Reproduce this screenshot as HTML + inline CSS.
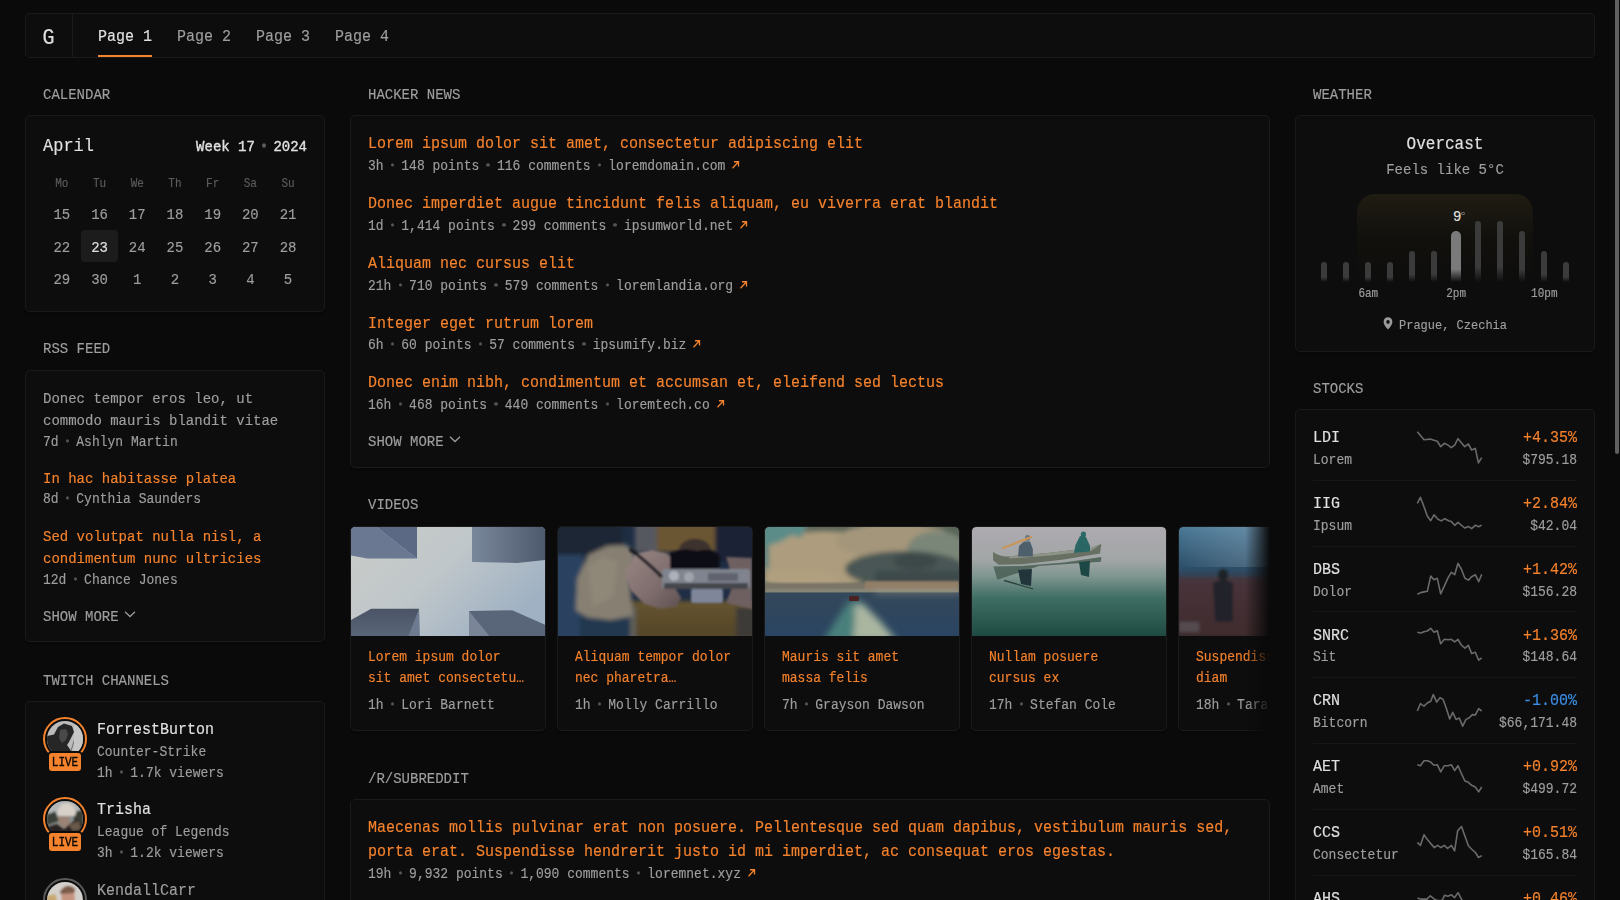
<!DOCTYPE html><html><head><meta charset="utf-8"><style>
*{box-sizing:border-box}
html,body{margin:0;padding:0;width:1620px;height:900px;overflow:hidden;background:#0a0a0a}
body{font-family:"Liberation Mono",monospace;font-size:13px;line-height:1.6;color:#9e9e9e;position:relative;-webkit-text-stroke:0.15px currentColor}
a{color:inherit;text-decoration:none}
.abs{position:absolute!important}
.card{position:absolute;background:#0d0d0d;border:1px solid #1a1a1a;border-radius:5px;padding:15px 17px;overflow:hidden;box-shadow:0 3px 0 0 #080808}
.wh{position:absolute;font-size:14px;line-height:23px;color:#9e9e9e;text-transform:uppercase;white-space:nowrap}
.hl{color:#e0e0e0}
.pri{color:#f5822c}
.sub{color:#5c5c5c}
.h1{font-size:17px;line-height:27.2px}
.h2{font-size:16px;line-height:25.6px}
.h3{font-size:15px;line-height:24px}
.h4{font-size:14px;line-height:22.4px}
.h5{font-size:12px;line-height:19.2px}
.h6{font-size:11px;line-height:17.6px}
.b{font-size:13px;line-height:20.8px}
.nw{white-space:nowrap}
.h1,.h2,.h3,.h4,.h5,.h6,.b,.more{position:relative;top:calc(.094em + .7px)}
.h1,.h2,.h3,.h4,.h5,.h6,.b,.more,.wh,.sy{transform:scaleY(1.1);transform-origin:0 calc(50% + .266em)}
.wh{padding-top:1.3px}
.sep{display:inline-block;width:3.5px;height:3.5px;border-radius:50%;background:#555;margin:0 7.1px;vertical-align:middle;position:relative;top:-1px}
.arr{display:inline-block;width:9px;height:9px;margin-left:6px;vertical-align:baseline;position:relative;top:0px}
.more{font-size:14px;line-height:22.4px;text-transform:uppercase;color:#9e9e9e}
</style></head><body><div class="abs" style="left:25px;top:13px;width:1570px;height:45px;background:#0d0d0d;border:1px solid #1a1a1a;border-radius:5px"></div>
<div class="abs" style="left:26px;top:14px;width:47px;height:43px;border-right:1px solid #1a1a1a"></div><div class="abs hl" style="left:42.6px;top:16.7px;font-size:20px;line-height:43px;transform:scaleY(1.12);transform-origin:0 26.8px">G</div>
<div class="abs hl h3" style="left:98px;top:15.6px;line-height:43px">Page 1</div>
<div class="abs h3" style="left:177px;top:15.6px;line-height:43px">Page 2</div>
<div class="abs h3" style="left:256px;top:15.6px;line-height:43px">Page 3</div>
<div class="abs h3" style="left:335px;top:15.6px;line-height:43px">Page 4</div>
<div class="abs" style="left:98px;top:55px;width:54px;height:2px;background:#f5822c"></div>

<div class="abs" style="left:1615px;top:-2px;width:4px;height:456px;background:#606060;border-radius:2px"></div>
<div class="wh" style="left:43px;top:83px">Calendar</div>
<div class="card" style="left:25px;top:115px;width:300px;height:197px"><div style="display:flex;justify-content:space-between;align-items:baseline"><div class="h1 hl">April</div><div class="h4 hl" style="-webkit-text-stroke:0.35px #e0e0e0">Week 17<span class="sep" style="background:#5c5c5c;margin:0 7px 0 7.5px;width:4px;height:4px"></span>2024</div></div><div style="display:flex;margin-top:16px" class="h6 sub"><div style="width:37.714px;text-align:center">Mo</div><div style="width:37.714px;text-align:center">Tu</div><div style="width:37.714px;text-align:center">We</div><div style="width:37.714px;text-align:center">Th</div><div style="width:37.714px;text-align:center">Fr</div><div style="width:37.714px;text-align:center">Sa</div><div style="width:37.714px;text-align:center">Su</div></div><div style="display:flex;flex-wrap:wrap;margin-top:5.6px"><div style="width:37.714px;text-align:center;padding:5px 0"><div class="h4">15</div></div><div style="width:37.714px;text-align:center;padding:5px 0"><div class="h4">16</div></div><div style="width:37.714px;text-align:center;padding:5px 0"><div class="h4">17</div></div><div style="width:37.714px;text-align:center;padding:5px 0"><div class="h4">18</div></div><div style="width:37.714px;text-align:center;padding:5px 0"><div class="h4">19</div></div><div style="width:37.714px;text-align:center;padding:5px 0"><div class="h4">20</div></div><div style="width:37.714px;text-align:center;padding:5px 0"><div class="h4">21</div></div><div style="width:37.714px;text-align:center;padding:5px 0"><div class="h4">22</div></div><div style="width:37.714px;text-align:center;padding:5px 0;background:#1c1c1c;border-radius:4px"><div class="h4 hl">23</div></div><div style="width:37.714px;text-align:center;padding:5px 0"><div class="h4">24</div></div><div style="width:37.714px;text-align:center;padding:5px 0"><div class="h4">25</div></div><div style="width:37.714px;text-align:center;padding:5px 0"><div class="h4">26</div></div><div style="width:37.714px;text-align:center;padding:5px 0"><div class="h4">27</div></div><div style="width:37.714px;text-align:center;padding:5px 0"><div class="h4">28</div></div><div style="width:37.714px;text-align:center;padding:5px 0"><div class="h4">29</div></div><div style="width:37.714px;text-align:center;padding:5px 0"><div class="h4">30</div></div><div style="width:37.714px;text-align:center;padding:5px 0"><div class="h4">1</div></div><div style="width:37.714px;text-align:center;padding:5px 0"><div class="h4">2</div></div><div style="width:37.714px;text-align:center;padding:5px 0"><div class="h4">3</div></div><div style="width:37.714px;text-align:center;padding:5px 0"><div class="h4">4</div></div><div style="width:37.714px;text-align:center;padding:5px 0"><div class="h4">5</div></div></div></div>
<div class="wh" style="left:43px;top:337px">RSS Feed</div>
<div class="card" style="left:25px;top:370px;width:300px;height:272px"><div class="h4 nw">Donec tempor eros leo, ut</div><div class="h4 nw">commodo mauris blandit vitae</div><div class="b nw">7d<span class="sep"></span>Ashlyn Martin</div><div class="h4 pri" style="margin-top:14.5px">In hac habitasse platea</div><div class="b nw">8d<span class="sep"></span>Cynthia Saunders</div><div class="h4 pri nw" style="margin-top:14.5px">Sed volutpat nulla nisl, a</div><div class="h4 pri nw">condimentum nunc ultricies</div><div class="b nw">12d<span class="sep"></span>Chance Jones</div><div class="more" style="margin-top:14.5px">Show more<svg width="12" height="8" viewBox="0 0 12 8" style="margin-left:5px;vertical-align:middle;position:relative;top:-2px"><path d="M1 1.5 L6 6 L11 1.5" stroke="#9e9e9e" stroke-width="1.2" fill="none"/></svg></div></div>
<div class="wh" style="left:43px;top:669px">Twitch Channels</div>
<div class="card" style="left:25px;top:701px;width:300px;height:260px"><div style="display:flex;gap:10px;margin-top:0px"><div style="position:relative;width:44px;height:44px;flex-shrink:0;border:2px solid #f5822c;border-radius:50%;padding:2px"><div style="width:36px;height:36px;border-radius:50%;overflow:hidden"><svg width="36" height="36" viewBox="0 0 36 36" style="display:block"><defs><filter id="a1b"><feGaussianBlur stdDeviation="0.6"/></filter></defs>
<rect width="36" height="36" fill="#bcbcbc"/>
<g filter="url(#a1b)">
<path d="M0 15 L7 13.5 L11 6 L17 2.5 L25 5 L27 11 L24 17 L22 21 L20 24 L27 34 L27 40 L0 40 Z" fill="#262626"/>
<path d="M13 9 L19 8 L21 13 L19 19 L15 22 L12 17 Z" fill="#4a4a4a"/>
<path d="M29 14 L22 36" stroke="#5a5a5a" stroke-width="0.8"/>
<rect x="27" y="4" width="12" height="34" fill="#c6c6c6"/>
</g></svg></div><div style="position:absolute;left:2px;top:32px;width:36px;height:22px;background:#0d0d0d;border-radius:5px;padding:2px"><div style="width:32px;height:18px;background:#f5822c;border-radius:3px;color:#0a0a0a;font-size:11px;line-height:18px;text-align:center;-webkit-text-stroke:0.35px #0a0a0a"><span style="display:inline-block;transform:scaleY(1.1);position:relative;top:1px">LIVE</span></div></div></div><div style="min-width:0"><div class="h3 hl">ForrestBurton</div><div class="b">Counter-Strike</div><div class="b nw">1h<span class="sep"></span>1.7k viewers</div></div></div><div style="display:flex;gap:10px;margin-top:14.4px"><div style="position:relative;width:44px;height:44px;flex-shrink:0;border:2px solid #f5822c;border-radius:50%;padding:2px"><div style="width:36px;height:36px;border-radius:50%;overflow:hidden"><svg width="36" height="36" viewBox="0 0 36 36" style="display:block"><defs><filter id="a2b"><feGaussianBlur stdDeviation="0.8"/></filter></defs>
<rect width="36" height="36" fill="#8a9090"/>
<g filter="url(#a2b)">
<rect x="0" y="0" width="36" height="12" fill="#b4b8b8"/>
<path d="M0 14 L8 10 L12 20 L0 24 Z" fill="#3a4038"/>
<path d="M26 12 L36 8 L36 26 L28 24 Z" fill="#3a3e36"/>
<path d="M10 13 Q11 3 19 2 Q27 2 29 12 L28 15 L11 15 Z" fill="#d6d0c8"/>
<path d="M11 15 L22 15 L23 24 L17 27 L12 23 Z" fill="#9a8274"/>
<path d="M0 26 L10 23 L17 28 L24 22 L30 18 L36 24 L36 40 L0 40 Z" fill="#2a2420"/>
<path d="M22 24 L32 20 L34 28 L26 30 Z" fill="#6a5a48"/>
</g></svg></div><div style="position:absolute;left:2px;top:32px;width:36px;height:22px;background:#0d0d0d;border-radius:5px;padding:2px"><div style="width:32px;height:18px;background:#f5822c;border-radius:3px;color:#0a0a0a;font-size:11px;line-height:18px;text-align:center;-webkit-text-stroke:0.35px #0a0a0a"><span style="display:inline-block;transform:scaleY(1.1);position:relative;top:1px">LIVE</span></div></div></div><div style="min-width:0"><div class="h3 hl">Trisha</div><div class="b">League of Legends</div><div class="b nw">3h<span class="sep"></span>1.2k viewers</div></div></div><div style="display:flex;gap:10px;margin-top:15px"><div style="position:relative;width:44px;height:44px;flex-shrink:0;border:2px solid #5a5a5a;border-radius:50%;padding:2px"><div style="width:36px;height:36px;border-radius:50%;overflow:hidden"><svg width="36" height="36" viewBox="0 0 36 36" style="display:block"><defs><filter id="a3b"><feGaussianBlur stdDeviation="0.8"/></filter></defs>
<rect width="36" height="36" fill="#d4d0cc"/>
<g filter="url(#a3b)">
<path d="M0 14 L8 12 L12 24 L8 40 L0 40 Z" fill="#c8a870"/>
<path d="M14 8 Q20 3 27 8 L28 20 Q22 28 15 22 Z" fill="#c49480"/>
<path d="M13 10 Q20 0 28 7 L27 11 L14 12 Z" fill="#7a5a48"/>
</g></svg></div></div><div style="min-width:0"><div class="h3 ">KendallCarr</div><div class="b">Valorant</div><div class="b nw">Offline</div></div></div></div>
<div class="wh" style="left:368px;top:83px">Hacker News</div>
<div class="card" style="left:350px;top:115px;width:920px;height:353px"><div style="margin-top:0px"><div class="h3 pri nw">Lorem ipsum dolor sit amet, consectetur adipiscing elit</div><div class="b nw">3h<span class="sep"></span>148 points<span class="sep"></span>116 comments<span class="sep"></span>loremdomain.com<svg class="arr" viewBox="0 0 9 9"><path d="M1.5 7.5 L7.5 1.5 M3 1.5 H7.5 V6" stroke="#f5822c" stroke-width="1.3" fill="none"/></svg></div></div><div style="margin-top:15px"><div class="h3 pri nw">Donec imperdiet augue tincidunt felis aliquam, eu viverra erat blandit</div><div class="b nw">1d<span class="sep"></span>1,414 points<span class="sep"></span>299 comments<span class="sep"></span>ipsumworld.net<svg class="arr" viewBox="0 0 9 9"><path d="M1.5 7.5 L7.5 1.5 M3 1.5 H7.5 V6" stroke="#f5822c" stroke-width="1.3" fill="none"/></svg></div></div><div style="margin-top:15px"><div class="h3 pri nw">Aliquam nec cursus elit</div><div class="b nw">21h<span class="sep"></span>710 points<span class="sep"></span>579 comments<span class="sep"></span>loremlandia.org<svg class="arr" viewBox="0 0 9 9"><path d="M1.5 7.5 L7.5 1.5 M3 1.5 H7.5 V6" stroke="#f5822c" stroke-width="1.3" fill="none"/></svg></div></div><div style="margin-top:15px"><div class="h3 pri nw">Integer eget rutrum lorem</div><div class="b nw">6h<span class="sep"></span>60 points<span class="sep"></span>57 comments<span class="sep"></span>ipsumify.biz<svg class="arr" viewBox="0 0 9 9"><path d="M1.5 7.5 L7.5 1.5 M3 1.5 H7.5 V6" stroke="#f5822c" stroke-width="1.3" fill="none"/></svg></div></div><div style="margin-top:15px"><div class="h3 pri nw">Donec enim nibh, condimentum et accumsan et, eleifend sed lectus</div><div class="b nw">16h<span class="sep"></span>468 points<span class="sep"></span>440 comments<span class="sep"></span>loremtech.co<svg class="arr" viewBox="0 0 9 9"><path d="M1.5 7.5 L7.5 1.5 M3 1.5 H7.5 V6" stroke="#f5822c" stroke-width="1.3" fill="none"/></svg></div></div><div class="more" style="margin-top:14px">Show more<svg width="12" height="8" viewBox="0 0 12 8" style="margin-left:5px;vertical-align:middle;position:relative;top:-2px"><path d="M1 1.5 L6 6 L11 1.5" stroke="#9e9e9e" stroke-width="1.2" fill="none"/></svg></div></div>
<div class="wh" style="left:368px;top:493px">Videos</div>
<div class="abs" style="left:350px;top:526px;width:920px;height:210px;overflow:hidden;-webkit-mask-image:linear-gradient(90deg,#000 0,#000 895px,transparent 920px)"><div style="position:absolute;left:0px;top:0;width:196px;height:205px;background:#0d0d0d;border:1px solid #1a1a1a;border-radius:5px;overflow:hidden;box-shadow:0 3px 0 0 #080808"><div style="width:194px;height:109px;border-radius:4px 4px 0 0;overflow:hidden"><svg width="194" height="109" viewBox="0 0 194 109" style="display:block">
<defs>
<linearGradient id="t1s" x1="0" y1="0" x2="1" y2="0.6"><stop offset="0" stop-color="#c9cbc7"/><stop offset="0.5" stop-color="#c0c7ca"/><stop offset="1" stop-color="#9fb1c3"/></linearGradient>
<linearGradient id="t1tr" x1="0" y1="0" x2="1" y2="0"><stop offset="0" stop-color="#7a889c"/><stop offset="1" stop-color="#4d596d"/></linearGradient>
<linearGradient id="t1bl" x1="0" y1="0" x2="0" y2="1"><stop offset="0" stop-color="#4a5466"/><stop offset="1" stop-color="#5a6578"/></linearGradient>
</defs>
<rect width="194" height="109" fill="url(#t1s)"/>
<polygon points="0,0 25.5,0 66,31.6 16.5,31.6 0,28.5" fill="#6a7892"/>
<polygon points="25.5,0 66,0 66,31.6" fill="#5b6985"/>
<polygon points="121,0 194,0 194,33 166,36 121,35" fill="url(#t1tr)"/>
<polygon points="0,93 20.2,81.7 68,81.7 68.5,109 0,109" fill="url(#t1bl)"/>
<polygon points="68,81.7 68.5,109 57.5,109" fill="#6d7a90"/>
<polygon points="118,84.1 161.2,83.3 194,97.7 194,109 118,109" fill="#596579"/>
<polygon points="118,84.1 138.4,109 118,109" fill="#7a8598"/>
</svg></div><div style="padding:10px 17px 0 17px"><div class="b pri nw">Lorem ipsum dolor</div><div class="b pri nw">sit amet consectetu…</div><div class="b nw" style="margin-top:6px">1h<span class="sep"></span>Lori Barnett</div></div></div><div style="position:absolute;left:207px;top:0;width:196px;height:205px;background:#0d0d0d;border:1px solid #1a1a1a;border-radius:5px;overflow:hidden;box-shadow:0 3px 0 0 #080808"><div style="width:194px;height:109px;border-radius:4px 4px 0 0;overflow:hidden"><svg width="194" height="109" viewBox="0 0 194 109" style="display:block">
<defs>
<filter id="t2b" x="-20%" y="-20%" width="140%" height="140%"><feGaussianBlur stdDeviation="2"/></filter>
<filter id="t2c" x="-20%" y="-20%" width="140%" height="140%"><feGaussianBlur stdDeviation="0.8"/></filter>
<linearGradient id="t2h" x1="0" y1="0" x2="1" y2="1"><stop offset="0" stop-color="#9a8886"/><stop offset="0.6" stop-color="#7e6c6c"/><stop offset="1" stop-color="#5e5050"/></linearGradient>
<linearGradient id="t2m" x1="0" y1="0" x2="0" y2="1"><stop offset="0" stop-color="#66552f"/><stop offset="1" stop-color="#4e4128"/></linearGradient>
</defs>
<rect width="194" height="109" fill="#1f2e44"/>
<g filter="url(#t2b)">
<rect x="-5" y="-5" width="70" height="35" fill="#1a2536"/>
<rect x="-5" y="28" width="30" height="90" fill="#2c4260"/>
<rect x="22" y="90" width="50" height="25" fill="#22374f"/>
<rect x="98" y="-5" width="60" height="30" fill="#6a5632"/>
<rect x="77" y="-5" width="22" height="30" fill="#56585e"/>
<rect x="157" y="-5" width="45" height="40" fill="#1c2436"/>
<rect x="72" y="74" width="130" height="45" fill="url(#t2m)"/>
<rect x="72" y="80" width="6" height="35" fill="#5e5e5a"/>
<rect x="178" y="80" width="25" height="30" fill="#3e3a38"/>
<path d="M17.8 83.3 L19.2 51.4 L30.3 27.8 L49.7 18.8 L69.2 18.1 L77.5 29.2 L72 55.6 L74.7 88.9 L52.5 93 L28.9 90.3 Z" fill="#878072"/>
<path d="M30 40 L45 30 L60 35 L55 70 L35 80 Z" fill="#958d7e" opacity="0.6"/>
</g>
<g filter="url(#t2c)">
<path d="M66.4 45.8 L77.5 26.4 L94.2 22.9 L109.4 26.4 L119 38.9 L113.6 55.6 L123.3 70.8 L119 79.2 L102.5 81.9 L85.8 76.4 L71.9 62.5 Z" fill="url(#t2h)"/>
<path d="M168 30 L194 31 L194 82 L168 76 L176 55 Z" fill="#6e6060"/>
<path d="M119 30 Q121 12 137 12 Q152 12 155 28 L162 40 L112 42 Z" fill="#3e302e"/>
<path d="M112 26 Q125 20 140 24 Q155 20 162 30 L161 44 L112 44 Z" fill="#0c0c12"/>
<rect x="104" y="42" width="88" height="20" rx="3" fill="#80848e"/>
<rect x="106" y="56" width="84" height="6" fill="#44464e"/>
<rect x="133" y="62" width="32" height="14" rx="2" fill="#80869a"/>
<circle cx="116" cy="49" r="5" fill="#aeb2ba"/>
<circle cx="131" cy="50" r="5" fill="#a0a4ac"/>
<rect x="150" y="46" width="30" height="8" fill="#60646e"/>
<path d="M72 22 Q88 34 104 50" stroke="#18181e" stroke-width="3.2" fill="none"/>
</g>
</svg></div><div style="padding:10px 17px 0 17px"><div class="b pri nw">Aliquam tempor dolor</div><div class="b pri nw">nec pharetra…</div><div class="b nw" style="margin-top:6px">1h<span class="sep"></span>Molly Carrillo</div></div></div><div style="position:absolute;left:414px;top:0;width:196px;height:205px;background:#0d0d0d;border:1px solid #1a1a1a;border-radius:5px;overflow:hidden;box-shadow:0 3px 0 0 #080808"><div style="width:194px;height:109px;border-radius:4px 4px 0 0;overflow:hidden"><svg width="194" height="109" viewBox="0 0 194 109" style="display:block">
<defs>
<filter id="t3b" x="-20%" y="-20%" width="140%" height="140%"><feGaussianBlur stdDeviation="2.5"/></filter>
<filter id="t3c" x="-20%" y="-20%" width="140%" height="140%"><feGaussianBlur stdDeviation="0.8"/></filter>
<linearGradient id="t3sea" x1="0" y1="0" x2="0" y2="1"><stop offset="0" stop-color="#34485a"/><stop offset="1" stop-color="#2a4462"/></linearGradient>
</defs>
<rect width="194" height="109" fill="#5a6458"/>
<g filter="url(#t3b)">
<ellipse cx="60" cy="32" rx="70" ry="28" fill="#ad9d7e"/>
<ellipse cx="130" cy="14" rx="60" ry="18" fill="#a4967a"/>
<ellipse cx="172" cy="24" rx="30" ry="20" fill="#7a8678"/>
<ellipse cx="140" cy="42" rx="60" ry="18" fill="#4a5654"/>
<ellipse cx="150" cy="34" rx="22" ry="9" fill="#3e4848"/>
<ellipse cx="35" cy="52" rx="38" ry="9" fill="#b0a080"/>
<path d="M-5 -5 L44 -5 L36 11 L27 8 L15 15 L-5 21 Z" fill="#5c8c88"/>
<rect x="-5" y="18" width="9" height="24" fill="#5e8480"/>
<rect x="110" y="44" width="90" height="14" fill="#3c4a4c"/>
</g>
<g filter="url(#t3c)">
<rect x="0" y="56" width="194" height="10" fill="#7a7466"/>
<rect x="100" y="54" width="94" height="11" fill="#927e66"/>
<rect x="0" y="62" width="194" height="4" fill="#8a8878"/>
</g>
<rect x="0" y="65.5" width="194" height="43.5" fill="url(#t3sea)"/>
<filter id="t3w" x="-30%" y="-30%" width="160%" height="160%"><feGaussianBlur stdDeviation="3.5"/></filter>
<g filter="url(#t3w)">
<path d="M84 74 L96 74 L112 90 L134 114 L58 114 L72 92 Z" fill="#4a807c"/>
<path d="M90 78 L98 78 L114 94 L130 114 L88 114 L90 94 Z" fill="#aab6a0"/>
<rect x="110" y="64" width="84" height="2" fill="#b0a898"/>
</g>
<rect x="84" y="69" width="10" height="5" rx="1" fill="#4a2222"/>
</svg></div><div style="padding:10px 17px 0 17px"><div class="b pri nw">Mauris sit amet</div><div class="b pri nw">massa felis</div><div class="b nw" style="margin-top:6px">7h<span class="sep"></span>Grayson Dawson</div></div></div><div style="position:absolute;left:621px;top:0;width:196px;height:205px;background:#0d0d0d;border:1px solid #1a1a1a;border-radius:5px;overflow:hidden;box-shadow:0 3px 0 0 #080808"><div style="width:194px;height:109px;border-radius:4px 4px 0 0;overflow:hidden"><svg width="194" height="109" viewBox="0 0 194 109" style="display:block">
<defs>
<linearGradient id="t4g" x1="0" y1="0" x2="0" y2="1"><stop offset="0" stop-color="#aeaab0"/><stop offset="0.3" stop-color="#a2a6a6"/><stop offset="0.45" stop-color="#7f9690"/><stop offset="0.65" stop-color="#3f6e64"/><stop offset="1" stop-color="#1e4a42"/></linearGradient>
<filter id="t4b" x="-20%" y="-20%" width="140%" height="140%"><feGaussianBlur stdDeviation="0.5"/></filter>
</defs>
<rect width="194" height="109" fill="url(#t4g)"/>
<g filter="url(#t4b)">
<path d="M21.1 25 Q28 30 36.4 29.4 L78.1 25.7 L119.7 20.8 L129.4 16.9 L128 26.4 L91.9 32.6 L50.3 37.2 L26.7 37.8 L21.1 33.3 Z" fill="#687064"/>
<path d="M36.4 29.4 L78.1 25.7 L119.7 20.8 L127 18.5 L119 24 L78 28.5 L38 31.5 Z" fill="#8e9488"/>
<path d="M21.5 39.6 L50 39 L92 35.5 L129.4 29.9 L129 34.7 L67 38.9 L25.3 52.8 Z" fill="#4c6258" opacity="0.9"/>
<ellipse cx="55.6" cy="11" rx="2.6" ry="3" fill="#6a7880"/>
<path d="M46 29.5 L47 19 L52 14.5 L58 14.5 L60.8 22 L60.8 29.5 Z" fill="#4e5e6a"/>
<ellipse cx="111.4" cy="7.5" rx="2.6" ry="3" fill="#2a6a66"/>
<path d="M102 26 L103.5 18 L108 9 L114 10 L118 19 L118 24.5 Z" fill="#2a6664"/>
<path d="M30 21.5 L60 9.7" stroke="#c8955a" stroke-width="2.2"/>
<path d="M46 43 L60 42 L59 59 L49 57 Z" fill="#22363a"/>
<path d="M107 35 L118 34 L117 50 L109 48 Z" fill="#1e4644"/>
<path d="M32 53.5 L61 61.8" stroke="#2e443e" stroke-width="1.4"/>
</g>
</svg></div><div style="padding:10px 17px 0 17px"><div class="b pri nw">Nullam posuere</div><div class="b pri nw">cursus ex</div><div class="b nw" style="margin-top:6px">17h<span class="sep"></span>Stefan Cole</div></div></div><div style="position:absolute;left:828px;top:0;width:196px;height:205px;background:#0d0d0d;border:1px solid #1a1a1a;border-radius:5px;overflow:hidden;box-shadow:0 3px 0 0 #080808"><div style="width:194px;height:109px;border-radius:4px 4px 0 0;overflow:hidden"><svg width="194" height="109" viewBox="0 0 194 109" style="display:block">
<defs>
<linearGradient id="t5g" x1="0" y1="0" x2="0" y2="1"><stop offset="0" stop-color="#4a7896"/><stop offset="0.38" stop-color="#2c4e68"/><stop offset="0.52" stop-color="#3e3440"/><stop offset="1" stop-color="#30262a"/></linearGradient>
<linearGradient id="t5h" x1="0" y1="0" x2="1" y2="0"><stop offset="0" stop-color="#fff" stop-opacity="0"/><stop offset="0.6" stop-color="#b8c8d8" stop-opacity="0.3"/><stop offset="1" stop-color="#fff" stop-opacity="0"/></linearGradient>
<filter id="t5b" x="-20%" y="-20%" width="140%" height="140%"><feGaussianBlur stdDeviation="1.5"/></filter>
</defs>
<rect width="194" height="109" fill="url(#t5g)"/>
<rect width="194" height="40" fill="url(#t5h)"/>
<g filter="url(#t5b)">
<rect x="0" y="50" width="194" height="59" fill="#4e3230" opacity="0.5"/><rect x="0" y="95" width="20" height="10" fill="#8090a0" opacity="0.3"/>
<ellipse cx="44" cy="48" rx="5" ry="6" fill="#1e2228"/>
<path d="M34 56 Q44 50 54 56 L54 95 L36 95 Z" fill="#22242a"/>
</g>
</svg></div><div style="padding:10px 17px 0 17px"><div class="b pri nw">Suspendisse</div><div class="b pri nw">diam</div><div class="b nw" style="margin-top:6px">18h<span class="sep"></span>Tara Vega</div></div></div></div>
<div class="wh" style="left:368px;top:767px">/r/subreddit</div>
<div class="card" style="left:350px;top:799px;width:920px;height:200px"><div class="h3 pri nw">Maecenas mollis pulvinar erat non posuere. Pellentesque sed quam dapibus, vestibulum mauris sed,</div><div class="h3 pri nw">porta erat. Suspendisse hendrerit justo id mi imperdiet, ac consequat eros egestas.</div><div class="b nw">19h<span class="sep"></span>9,932 points<span class="sep"></span>1,090 comments<span class="sep"></span>loremnet.xyz<svg class="arr" viewBox="0 0 9 9"><path d="M1.5 7.5 L7.5 1.5 M3 1.5 H7.5 V6" stroke="#f5822c" stroke-width="1.3" fill="none"/></svg></div></div>
<div class="wh" style="left:1313px;top:83px">Weather</div>
<div class="card" style="left:1295px;top:115px;width:300px;height:237px;text-align:center"><div class="h2 hl">Overcast</div><div class="h4">Feels like 5°C</div><div style="position:absolute;left:0;top:0;width:300px;height:300px"><div style="position:absolute;left:61px;top:78px;width:176px;height:90px;border-radius:18px 18px 0 0;background:linear-gradient(180deg,#1f1c12 0%,rgba(20,18,12,0.6) 50%,rgba(13,13,13,0) 100%)"></div><div style="position:absolute;left:25.0px;top:145.5px;width:6px;height:20.3px;border-radius:3.0px 3.0px 0 0;background:linear-gradient(180deg,#3b3b3b 0%,#3b3b3b 75%,rgba(13,13,13,0) 100%)"></div><div style="position:absolute;left:47.0px;top:145.5px;width:6px;height:20.3px;border-radius:3.0px 3.0px 0 0;background:linear-gradient(180deg,#3b3b3b 0%,#3b3b3b 75%,rgba(13,13,13,0) 100%)"></div><div style="position:absolute;left:69.0px;top:145.5px;width:6px;height:20.3px;border-radius:3.0px 3.0px 0 0;background:linear-gradient(180deg,#3b3b3b 0%,#3b3b3b 75%,rgba(13,13,13,0) 100%)"></div><div style="position:absolute;left:91.0px;top:145.5px;width:6px;height:20.3px;border-radius:3.0px 3.0px 0 0;background:linear-gradient(180deg,#3b3b3b 0%,#3b3b3b 75%,rgba(13,13,13,0) 100%)"></div><div style="position:absolute;left:113.0px;top:135.3px;width:6px;height:30.5px;border-radius:3.0px 3.0px 0 0;background:linear-gradient(180deg,#3b3b3b 0%,#3b3b3b 75%,rgba(13,13,13,0) 100%)"></div><div style="position:absolute;left:135.0px;top:135.3px;width:6px;height:30.5px;border-radius:3.0px 3.0px 0 0;background:linear-gradient(180deg,#3b3b3b 0%,#3b3b3b 75%,rgba(13,13,13,0) 100%)"></div><div style="position:absolute;left:155.0px;top:115.3px;width:10px;height:50.5px;border-radius:5.0px 5.0px 0 0;background:linear-gradient(180deg,#7a7a7a 0%,#7a7a7a 75%,rgba(13,13,13,0) 100%)"></div><div style="position:absolute;left:179.0px;top:105.3px;width:6px;height:60.5px;border-radius:3.0px 3.0px 0 0;background:linear-gradient(180deg,#3b3b3b 0%,#3b3b3b 75%,rgba(13,13,13,0) 100%)"></div><div style="position:absolute;left:201.0px;top:105.3px;width:6px;height:60.5px;border-radius:3.0px 3.0px 0 0;background:linear-gradient(180deg,#3b3b3b 0%,#3b3b3b 75%,rgba(13,13,13,0) 100%)"></div><div style="position:absolute;left:223.0px;top:115.3px;width:6px;height:50.5px;border-radius:3.0px 3.0px 0 0;background:linear-gradient(180deg,#3b3b3b 0%,#3b3b3b 75%,rgba(13,13,13,0) 100%)"></div><div style="position:absolute;left:245.0px;top:135.3px;width:6px;height:30.5px;border-radius:3.0px 3.0px 0 0;background:linear-gradient(180deg,#3b3b3b 0%,#3b3b3b 75%,rgba(13,13,13,0) 100%)"></div><div style="position:absolute;left:267.0px;top:145.5px;width:6px;height:20.3px;border-radius:3.0px 3.0px 0 0;background:linear-gradient(180deg,#3b3b3b 0%,#3b3b3b 75%,rgba(13,13,13,0) 100%)"></div><div class="hl" style="position:absolute;left:157px;top:91px;font-size:14px;line-height:20px;width:24px;text-align:left">9</div><div style="position:absolute;left:165.2px;top:95.8px;width:3.5px;height:3.5px;border:0.8px solid #8a8a8a;border-radius:50%"></div><div class="h6" style="position:absolute;left:42.3px;top:170.4px;width:60px;text-align:center">6am</div><div class="h6" style="position:absolute;left:130.1px;top:170.4px;width:60px;text-align:center">2pm</div><div class="h6" style="position:absolute;left:218.3px;top:170.4px;width:60px;text-align:center">10pm</div><div class="h5" style="position:absolute;left:0;top:201.0px;width:298px;text-align:center"><svg width="10" height="12" viewBox="0 0 10 12" style="vertical-align:middle;margin-right:6px;position:relative;top:-2px"><path d="M5 0.5 C2.4 0.5 0.6 2.4 0.6 4.7 C0.6 7.6 5 11.5 5 11.5 C5 11.5 9.4 7.6 9.4 4.7 C9.4 2.4 7.6 0.5 5 0.5 Z M5 3 A1.7 1.7 0 1 1 5 6.4 A1.7 1.7 0 1 1 5 3 Z" fill="#9a9a9a" fill-rule="evenodd"/></svg>Prague, Czechia</div></div></div>
<div class="wh" style="left:1313px;top:376.5px">Stocks</div>
<div class="card" style="left:1295px;top:409px;width:300px;height:600px"><div style="display:flex;justify-content:space-between;height:44.8px"><div><div class="h3 hl">LDI</div><div class="b">Lorem</div></div><div style="text-align:right"><div class="h3" style="color:#f5822c">+4.35%</div><div class="b">$795.18</div></div></div><div style="height:1px;background:#161616;margin:10px 0"></div><div style="display:flex;justify-content:space-between;height:44.8px"><div><div class="h3 hl">IIG</div><div class="b">Ipsum</div></div><div style="text-align:right"><div class="h3" style="color:#f5822c">+2.84%</div><div class="b">$42.04</div></div></div><div style="height:1px;background:#161616;margin:10px 0"></div><div style="display:flex;justify-content:space-between;height:44.8px"><div><div class="h3 hl">DBS</div><div class="b">Dolor</div></div><div style="text-align:right"><div class="h3" style="color:#f5822c">+1.42%</div><div class="b">$156.28</div></div></div><div style="height:1px;background:#161616;margin:10px 0"></div><div style="display:flex;justify-content:space-between;height:44.8px"><div><div class="h3 hl">SNRC</div><div class="b">Sit</div></div><div style="text-align:right"><div class="h3" style="color:#f5822c">+1.36%</div><div class="b">$148.64</div></div></div><div style="height:1px;background:#161616;margin:10px 0"></div><div style="display:flex;justify-content:space-between;height:44.8px"><div><div class="h3 hl">CRN</div><div class="b">Bitcorn</div></div><div style="text-align:right"><div class="h3" style="color:#3a8ee6">-1.00%</div><div class="b">$66,171.48</div></div></div><div style="height:1px;background:#161616;margin:10px 0"></div><div style="display:flex;justify-content:space-between;height:44.8px"><div><div class="h3 hl">AET</div><div class="b">Amet</div></div><div style="text-align:right"><div class="h3" style="color:#f5822c">+0.92%</div><div class="b">$499.72</div></div></div><div style="height:1px;background:#161616;margin:10px 0"></div><div style="display:flex;justify-content:space-between;height:44.8px"><div><div class="h3 hl">CCS</div><div class="b">Consectetur</div></div><div style="text-align:right"><div class="h3" style="color:#f5822c">+0.51%</div><div class="b">$165.84</div></div></div><div style="height:1px;background:#161616;margin:10px 0"></div><div style="display:flex;justify-content:space-between;height:44.8px"><div><div class="h3 hl">AHS</div><div class="b">Adipiscing</div></div><div style="text-align:right"><div class="h3" style="color:#f5822c">+0.46%</div><div class="b">$120.00</div></div></div></div>
<svg class="abs" style="left:0;top:0" width="1620" height="900" viewBox="0 0 1620 900"><path d="M1417.3 431.7 L1424.0 439.7 L1430.0 439.1 L1434.0 440.3 L1437.3 441.3 L1440.7 446.7 L1444.4 443.3 L1448.0 445.1 L1451.3 447.7 L1454.7 445.1 L1458.0 438.7 L1464.7 446.7 L1468.4 444.0 L1471.6 450.0 L1475.3 448.4 L1478.4 462.9 L1481.7 457.6" stroke="#6a6a6a" stroke-width="1.6" fill="none" stroke-linejoin="round"/><path d="M1417.3 503.3 L1420.4 497.3 L1424.0 506.7 L1427.3 516.0 L1430.7 520.7 L1434.0 514.9 L1438.0 519.3 L1441.3 520.9 L1444.7 518.7 L1448.7 520.7 L1451.3 521.6 L1454.7 525.3 L1458.0 522.4 L1464.7 528.0 L1468.4 526.4 L1471.6 528.7 L1475.3 525.3 L1478.7 526.7 L1481.7 525.1" stroke="#6a6a6a" stroke-width="1.6" fill="none" stroke-linejoin="round"/><path d="M1417.3 594.3 L1420.7 592.6 L1424.0 591.9 L1427.3 591.3 L1430.7 576.1 L1434.0 579.7 L1437.3 578.3 L1440.7 593.9 L1444.4 585.9 L1448.0 577.9 L1451.3 572.3 L1454.7 574.7 L1458.0 563.3 L1461.3 569.0 L1464.9 578.3 L1468.4 580.1 L1471.6 576.7 L1475.3 574.7 L1478.7 581.7 L1481.7 574.3" stroke="#6a6a6a" stroke-width="1.6" fill="none" stroke-linejoin="round"/><path d="M1417.3 632.3 L1420.7 633.0 L1424.0 631.7 L1427.3 631.0 L1430.7 628.3 L1434.0 632.3 L1437.3 630.7 L1440.7 643.7 L1444.4 639.3 L1448.0 639.7 L1451.3 639.3 L1454.7 641.9 L1458.0 639.3 L1461.3 645.0 L1464.9 648.1 L1468.4 645.4 L1471.6 653.4 L1475.3 652.3 L1478.7 660.1 L1481.7 657.9" stroke="#6a6a6a" stroke-width="1.6" fill="none" stroke-linejoin="round"/><path d="M1417.3 711.0 L1420.4 703.7 L1424.0 706.1 L1427.3 703.0 L1430.7 701.3 L1433.3 694.6 L1436.7 702.1 L1440.0 697.7 L1443.1 699.4 L1446.3 708.3 L1449.7 719.0 L1452.7 712.3 L1456.0 719.4 L1459.3 718.1 L1462.7 726.1 L1466.0 719.4 L1469.3 717.7 L1472.4 714.6 L1475.3 715.0 L1478.7 708.7 L1481.7 711.0" stroke="#6a6a6a" stroke-width="1.6" fill="none" stroke-linejoin="round"/><path d="M1417.3 764.7 L1420.4 765.7 L1424.0 760.7 L1427.3 760.7 L1430.7 762.1 L1434.0 765.3 L1437.3 764.7 L1440.7 771.9 L1444.4 765.7 L1448.0 765.7 L1451.3 764.7 L1454.7 770.6 L1458.0 765.7 L1461.3 773.3 L1464.9 781.0 L1468.4 782.3 L1471.6 785.3 L1475.3 787.0 L1478.7 791.9 L1481.7 787.0" stroke="#6a6a6a" stroke-width="1.6" fill="none" stroke-linejoin="round"/><path d="M1417.4 842.4 L1420.4 845.4 L1424.0 834.8 L1427.0 839.1 L1430.3 843.1 L1434.4 847.6 L1437.6 845.4 L1441.0 847.6 L1444.2 845.4 L1447.6 848.5 L1451.4 845.4 L1454.6 850.9 L1457.7 830.6 L1461.5 826.5 L1464.8 835.8 L1468.4 845.7 L1471.4 849.0 L1475.2 852.3 L1478.5 857.5 L1481.8 855.6" stroke="#6a6a6a" stroke-width="1.6" fill="none" stroke-linejoin="round"/><path d="M1417.4 898.1 L1420.4 899.1 L1427.0 899.1 L1430.3 895.8 L1434.4 899.1 L1437.4 900.5 L1442.1 900.5 L1444.5 895.3 L1447.8 896.2 L1451.4 894.8 L1454.6 897.6 L1458.0 892.6 L1461.5 899.1 L1463.8 903.8" stroke="#6a6a6a" stroke-width="1.6" fill="none" stroke-linejoin="round"/></svg></body></html>
